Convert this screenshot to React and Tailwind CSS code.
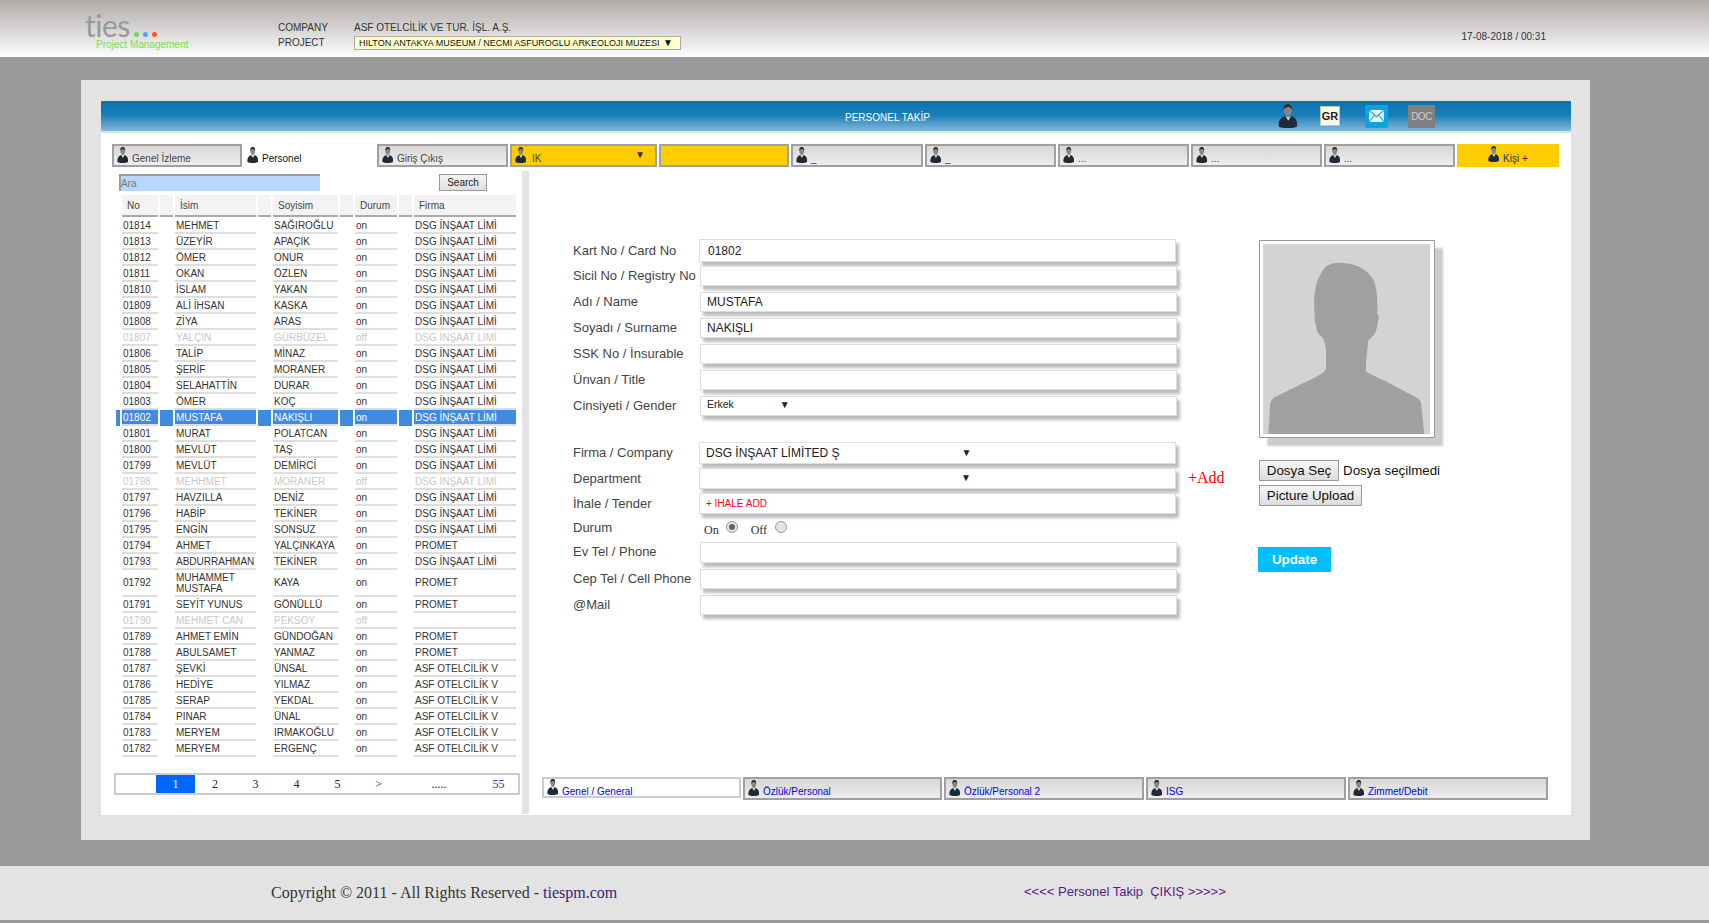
import React from "react";

const PersonIcon = ({ className = "w-[11px] h-[16px]" }) => (
  <svg viewBox="0 0 26 32" preserveAspectRatio="none" className={`shrink-0 ${className}`}>
    <path d="M8 8C7 3 10 0 14 0c4 0 6 3 5 8 0 4-2 8-5 8s-6-4-6-8z" fill="#8d8582" />
    <path d="M8 8C7 2 11-1 15 0c3 1 5 4 4 8-1-3-3-4-5-4S9 5 8 8z" fill="#2c2c2c" />
    <path d="M1 30c-1-8 3-12 9-14l4 3 4-3c6 2 9 6 8 14-5 3-20 3-25 0z" fill="#1d2a38" />
    <path d="M10 16l4 6 4-6-4 2z" fill="#dfe3e6" />
  </svg>
);

const Tab = ({ w, label, yellow, arrow, blue }) => (
  <div
    className={`${w} h-[23px] border-2 border-[#a0a0a0] flex items-start pl-[3px] pt-[1px] ${
      yellow ? "bg-[#ffcc00]" : "bg-gradient-to-b from-[#d8d6d6] to-[#eeeeee]"
    }`}
  >
    {label !== undefined && <PersonIcon />}
    {label !== undefined && (
      <span className={`${yellow ? "ml-[6px]" : "ml-[4px]"} mt-[5px] text-[10px] leading-[13px] ${blue ? "text-[#0000ee]" : "text-[#444]"}`}>{label}</span>
    )}
    {arrow && <span className="ml-auto mr-[10px] mt-px text-[10px] leading-[14px] text-[#333]">▼</span>}
  </div>
);

const people = [
  ["01814", "MEHMET", "SAĞIROĞLU", "on", "DSG İNŞAAT LİMİ"],
  ["01813", "ÜZEYİR", "APAÇIK", "on", "DSG İNŞAAT LİMİ"],
  ["01812", "ÖMER", "ONUR", "on", "DSG İNŞAAT LİMİ"],
  ["01811", "OKAN", "ÖZLEN", "on", "DSG İNŞAAT LİMİ"],
  ["01810", "İSLAM", "YAKAN", "on", "DSG İNŞAAT LİMİ"],
  ["01809", "ALİ İHSAN", "KASKA", "on", "DSG İNŞAAT LİMİ"],
  ["01808", "ZİYA", "ARAS", "on", "DSG İNŞAAT LİMİ"],
  ["01807", "YALÇIN", "GÜRBÜZEL", "off", "DSG İNŞAAT LİMİ"],
  ["01806", "TALİP", "MİNAZ", "on", "DSG İNŞAAT LİMİ"],
  ["01805", "ŞERİF", "MORANER", "on", "DSG İNŞAAT LİMİ"],
  ["01804", "SELAHATTİN", "DURAR", "on", "DSG İNŞAAT LİMİ"],
  ["01803", "ÖMER", "KOÇ", "on", "DSG İNŞAAT LİMİ"],
  ["01802", "MUSTAFA", "NAKIŞLI", "on", "DSG İNŞAAT LİMİ"],
  ["01801", "MURAT", "POLATCAN", "on", "DSG İNŞAAT LİMİ"],
  ["01800", "MEVLÜT", "TAŞ", "on", "DSG İNŞAAT LİMİ"],
  ["01799", "MEVLÜT", "DEMİRCİ", "on", "DSG İNŞAAT LİMİ"],
  ["01798", "MEHHMET", "MORANER", "off", "DSG İNŞAAT LİMİ"],
  ["01797", "HAVZILLA", "DENİZ", "on", "DSG İNŞAAT LİMİ"],
  ["01796", "HABİP", "TEKİNER", "on", "DSG İNŞAAT LİMİ"],
  ["01795", "ENGİN", "SONSUZ", "on", "DSG İNŞAAT LİMİ"],
  ["01794", "AHMET", "YALÇINKAYA", "on", "PROMET"],
  ["01793", "ABDURRAHMAN", "TEKİNER", "on", "DSG İNŞAAT LİMİ"],
  ["01792", "MUHAMMET MUSTAFA", "KAYA", "on", "PROMET"],
  ["01791", "SEYİT YUNUS", "GÖNÜLLÜ", "on", "PROMET"],
  ["01790", "MEHMET CAN", "PEKSOY", "off", ""],
  ["01789", "AHMET EMİN", "GÜNDOĞAN", "on", "PROMET"],
  ["01788", "ABULSAMET", "YANMAZ", "on", "PROMET"],
  ["01787", "ŞEVKİ", "ÜNSAL", "on", "ASF OTELCİLİK V"],
  ["01786", "HEDİYE", "YILMAZ", "on", "ASF OTELCİLİK V"],
  ["01785", "SERAP", "YEKDAL", "on", "ASF OTELCİLİK V"],
  ["01784", "PINAR", "ÜNAL", "on", "ASF OTELCİLİK V"],
  ["01783", "MERYEM", "IRMAKOĞLU", "on", "ASF OTELCİLİK V"],
  ["01782", "MERYEM", "ERGENÇ", "on", "ASF OTELCİLİK V"],
];

const PersonTable = () => {
  const head = "h-[22px] bg-[#f3f3f3] border-b-2 border-[#aaa] pl-[5px] text-left font-normal text-[#444]";
  return (
    <table className="table-fixed w-[404px] ml-[13px] mt-[4px] border-separate border-spacing-x-[2px] border-spacing-y-0 text-[10px] leading-[11px]">
      <colgroup>
        <col className="w-[4px]" />
        <col className="w-[36px]" />
        <col className="w-[13px]" />
        <col className="w-[81px]" />
        <col className="w-[13px]" />
        <col className="w-[65px]" />
        <col className="w-[13px]" />
        <col className="w-[42px]" />
        <col className="w-[13px]" />
        <col className="w-[102px]" />
      </colgroup>
      <thead>
        <tr>
          <th />
          <th className={head}>No</th>
          <th className={head} />
          <th className={head}>İsim</th>
          <th className={head} />
          <th className={head}>Soyisim</th>
          <th className={head} />
          <th className={head}>Durum</th>
          <th className={head} />
          <th className={head}>Firma</th>
        </tr>
        <tr className="h-px" />
      </thead>
      <tbody>
        {people.map((p) => {
          const active = p[0] === "01802";
          const color = active ? "text-white bg-[#4289e0]" : p[3] === "off" ? "text-[#c8c8c8]" : "text-[#333]";
          const rowH = p[0] === "01792" ? "h-[27px]" : "h-[16px]";
          const cell = `${rowH} pl-px border-b-2 border-[#dedede] align-middle ${color}`;
          const gap = `border-b-0 ${active ? "bg-[#4289e0]" : ""}`;
          return (
            <tr key={p[0]}>
              <td className={active ? "bg-[#4289e0]" : ""} />
              <td className={`${cell} pl-[2px]`}>{p[0]}</td>
              <td className={gap} />
              <td className={cell}>{p[1]}</td>
              <td className={gap} />
              <td className={cell}>{p[2]}</td>
              <td className={gap} />
              <td className={cell}>{p[3]}</td>
              <td className={gap} />
              <td className={cell}>{p[4]}</td>
            </tr>
          );
        })}
      </tbody>
    </table>
  );
};

const Pagination = () => (
  <div className="mt-[16px] ml-[13px] w-[406px] h-[22px] border-2 border-[#ccc] flex items-stretch font-['Liberation_Serif',serif] text-[12px] text-[#222]">
    <span className="w-[40px]" />
    <span className="w-[39px] bg-[#0066ff] text-white flex items-center justify-center">1</span>
    <span className="w-[40px] flex items-center justify-center">2</span>
    <span className="w-[41px] flex items-center justify-center">3</span>
    <span className="w-[41px] flex items-center justify-center">4</span>
    <span className="w-[41px] flex items-center justify-center">5</span>
    <span className="w-[41px] flex items-center justify-center text-[#0000ee]">&gt;</span>
    <span className="w-[80px] flex items-center justify-center">.....</span>
    <span className="flex-1 flex items-center justify-center text-[#3b2a9a]">55</span>
  </div>
);

const Field = ({ label, mt, h, narrow, lead = "leading-[20px]", children, side }) => (
  <div className={`flex ${mt} ${h}`}>
    <div className={`${narrow ? "w-[126px]" : "w-[127px]"} shrink-0 text-[13px] ${lead} text-[#444] whitespace-nowrap`}>{label}</div>
    <div className="w-[477px] shrink-0 bg-white border border-[#ddd] shadow-[3px_4px_3px_#bbb] flex items-center pl-[6px] text-[12px] text-[#222]">
      {children}
    </div>
    {side}
  </div>
);

const Arrow = ({ ml }) => <span className={`${ml} text-[10px] leading-[12px] text-[#222]`}>▼</span>;

const Radio = ({ checked }) => (
  <span className="w-[12px] h-[12px] rounded-full border border-[#999] bg-[#e4e4e4] flex items-center justify-center">
    {checked && <span className="w-[6px] h-[6px] rounded-full bg-[#666]" />}
  </span>
);

const Silhouette = () => (
  <svg viewBox="0 0 501 571" className="w-[167px] h-[190px] block bg-[#d3d3d3]">
    <path
      d="M16 571 L21 480 Q24 466 36 460 L166 396 Q186 386 189 375 L189 319 Q186 290 176 279 Q160 270 158 240 Q152 232 156 214 Q150 180 156 140 Q160 105 186 69 Q205 56 231 56 Q300 58 330 105 Q345 130 343 209 Q350 220 346 228 Q340 265 336 269 Q322 285 316 289 L309 359 L309 384 Q340 400 361 409 L466 464 Q476 472 476 489 L484 571 Z"
      fill="#a0a0a0"
    />
  </svg>
);

const App = () => (
  <div className="w-[1709px] h-[923px] overflow-hidden bg-[#999999] font-['Liberation_Sans',Arial,sans-serif]">
    {/* top bar */}
    <header className="h-[57px] bg-gradient-to-b from-[#b0acaa] to-[#fdfdfd] flex pl-[85px] pr-[163px]">
      <div className="w-[193px] pt-[12px]">
        <div className="flex items-end h-[26px]">
          <span className="font-['Lato',sans-serif] font-normal text-[30px] leading-[26px] text-[#999] tracking-[-0.5px]">ties</span>
          <span className="w-[5px] h-[5px] rounded-full bg-[#66dd55] ml-[4px] mb-[1px]" />
          <span className="w-[5px] h-[5px] rounded-full bg-[#44aaff] ml-[4px] mb-[1px]" />
          <span className="w-[5px] h-[5px] rounded-full bg-[#ff5511] ml-[4px] mb-[1px]" />
        </div>
        <div className="mt-px ml-[11px] text-[10px] leading-[12px] text-[#77dd55] whitespace-nowrap">Project Management</div>
      </div>
      <div className="w-[76px] pt-[20px] text-[10px] leading-[15px] text-[#333]">
        <div>COMPANY</div>
        <div>PROJECT</div>
      </div>
      <div className="pt-[20px] text-[10px] text-[#333]">
        <div className="leading-[15px]">ASF OTELCİLİK VE TUR. İŞL. A.Ş.</div>
        <div className="w-[327px] h-[14px] mt-px bg-[#ffffcc] border border-[#aaa] flex items-center pl-[4px] justify-between pr-[7px] text-[9px] leading-[12px] text-[#111] whitespace-nowrap">
          HILTON ANTAKYA MUSEUM / NECMI ASFUROGLU ARKEOLOJI MUZESI
          <span className="text-[10px]">▼</span>
        </div>
      </div>
      <div className="ml-auto pt-[30px] text-[10px] leading-[14px] text-[#333]">17-08-2018 / 00:31</div>
    </header>

    {/* main panel */}
    <main className="mt-[23px] ml-[81px] w-[1509px] h-[760px] bg-[#e3e3e3] pt-[21px] pl-[20px]">
      <div className="w-[1470px] h-[714px] bg-white flex flex-col">
        <div className="h-[30px] bg-gradient-to-b from-[#0872af] via-[#1a80b8] to-[#7fb9dc] flex items-center shrink-0 pl-[744px]">
          <span className="w-[433px] mt-[2px] text-[10px] text-white">PERSONEL TAKİP</span>
          <PersonIcon className="w-[19px] h-[24px]" />
          <span className="ml-[23px] w-[20px] h-[20px] bg-[#f6f8f0] border border-[#b6d09a] text-[11px] font-bold text-[#222] flex items-center justify-center">GR</span>
          <span className="ml-[25px] w-[23px] h-[23px] rounded-[2px] bg-[#0fa3dc] flex items-center justify-center">
            <svg viewBox="0 0 20 16" className="w-[15px] h-[12px]">
              <rect width="20" height="16" fill="#e8f6fc" />
              <path d="M0 0l10 9L20 0M0 16l7-9M20 16l-7-9" fill="none" stroke="#0fa3dc" strokeWidth="1.4" />
            </svg>
          </span>
          <span className="ml-[20px] w-[27px] h-[23px] bg-[#808080] text-[10px] tracking-[-0.5px] text-[#ccc] flex items-center justify-center">DOC</span>
        </div>
        <div className="h-[2px] bg-[#e3e3e3] shrink-0" />

        {/* tabs */}
        <div className="mt-[11px] ml-[11px] h-[23px] flex gap-[2px] shrink-0">
          <Tab w="w-[130px]" label="Genel İzleme" />
          <div className="w-[131px] flex items-start pl-[3px] pt-[3px]">
            <PersonIcon />
            <span className="ml-[4px] mt-[5px] text-[10px] leading-[13px] text-[#111]">Personel</span>
          </div>
          <Tab w="w-[131px]" label="Giriş Çıkış" />
          <Tab w="w-[147px]" label="IK" yellow arrow />
          <Tab w="w-[130px]" yellow />
          <Tab w="w-[132px]" label="_" />
          <Tab w="w-[131px]" label="_" />
          <Tab w="w-[131px]" label="..." />
          <Tab w="w-[131px]" label="..." />
          <Tab w="w-[131px]" label="..." />
          <div className="w-[102px] bg-[#ffcc00] flex items-start pl-[31px] pt-[2px]">
            <PersonIcon />
            <span className="ml-[4px] mt-[6px] text-[10px] leading-[13px] text-[#333]">Kişi +</span>
          </div>
        </div>

        <div className="mt-[4px] flex flex-1 min-h-0">
          {/* left list */}
          <div className="w-[421px] shrink-0 pt-[3px]">
            <div className="flex ml-[18px] h-[17px]">
              <div className="w-[201px] h-[17px] bg-[#b8d8fb] border-t-2 border-l-2 border-[#999] border-r-0 border-b-0 text-[10px] leading-[15px] text-[#777]">Ara</div>
              <button className="ml-[119px] w-[48px] h-[17px] border border-[#999] bg-gradient-to-b from-[#f4f4f4] to-[#e0e0e0] text-[10px] leading-[14px] text-[#222]">
                Search
              </button>
            </div>
            <PersonTable />
            <Pagination />
          </div>
          <div className="w-[7px] h-[643px] bg-[#e3e3e3] shrink-0" />

          {/* right form */}
          <div className="flex-1 flex flex-col min-w-0">
            <div className="flex pl-[44px] pt-[68px]">
              <div className="w-[686px] shrink-0">
                <Field label="Kart No / Card No" mt="mt-0" h="h-[23px]" narrow lead="leading-[23px]">
                  <span className="ml-[2px]">01802</span>
                </Field>
                <Field label="Sicil No / Registry No" mt="mt-[4px]" h="h-[20px]" lead="leading-[19px]" />
                <Field label="Adı / Name" mt="mt-[6px]" h="h-[20px]">MUSTAFA</Field>
                <Field label="Soyadı / Surname" mt="mt-[6px]" h="h-[20px]">NAKIŞLI</Field>
                <Field label="SSK No / İnsurable" mt="mt-[6px]" h="h-[20px]" />
                <Field label="Ünvan / Title" mt="mt-[6px]" h="h-[20px]" />
                <Field label="Cinsiyeti / Gender" mt="mt-[6px]" h="h-[20px]">
                  <span className="text-[10.5px] mb-[2px]">Erkek</span>
                  <Arrow ml="ml-[46px] mb-[3px]" />
                </Field>
                <Field label="Firma / Company" mt="mt-[26px]" h="h-[22px]" narrow lead="leading-[22px]">
                  DSG İNŞAAT LİMİTED Ş
                  <Arrow ml="ml-[122px]" />
                </Field>
                <Field
                  label="Department"
                  mt="mt-[4px]"
                  h="h-[21px]"
                  narrow
                  lead="leading-[21px]"
                  side={<span className="ml-[12px] font-['Liberation_Serif',serif] text-[16px] leading-[20px] text-[#ff0000]">+Add</span>}
                >
                  <Arrow ml="ml-[255px] mb-[1px]" />
                </Field>
                <Field label="İhale / Tender" mt="mt-[4px]" h="h-[21px]" narrow lead="leading-[21px]">
                  <span className="text-[10px] text-[#ff0022]">+ IHALE ADD</span>
                </Field>
                <div className="flex h-[20px] mt-[4px]">
                  <div className="w-[131px] shrink-0 text-[13px] leading-[20px] text-[#444]">Durum</div>
                  <div className="flex items-start font-['Liberation_Serif',serif] text-[12px] leading-[20px] text-[#333]">
                    <span className="mt-[2px]">On</span>
                    <span className="ml-[7px] mt-[3px]"><Radio checked /></span>
                    <span className="ml-[13px] mt-[2px]">Off</span>
                    <span className="ml-[8px] mt-[3px]"><Radio /></span>
                  </div>
                </div>
                <Field label="Ev Tel / Phone" mt="mt-[4px]" h="h-[21px]" />
                <Field label="Cep Tel / Cell Phone" mt="mt-[6px]" h="h-[20px]" />
                <Field label="@Mail" mt="mt-[6px]" h="h-[20px]" />
              </div>

              <div className="pt-px">
                <div className="w-[176px] h-[198px] border border-[#999] bg-white p-[3px] shadow-[8px_8px_2px_#cccccc]">
                  <Silhouette />
                </div>
                <div className="mt-[22px] flex items-center h-[21px] text-[13.33px] text-[#111]">
                  <button className="w-[80px] h-[21px] border border-[#999] bg-gradient-to-b from-[#f6f6f6] to-[#dddddd] leading-[18px]">Dosya Seç</button>
                  <span className="ml-[4px] whitespace-nowrap">Dosya seçilmedi</span>
                </div>
                <button className="mt-[4px] block w-[103px] h-[21px] border border-[#999] bg-gradient-to-b from-[#f6f6f6] to-[#dddddd] text-[13.33px] leading-[18px] text-[#111]">
                  Picture Upload
                </button>
                <button className="mt-[41px] -ml-px block w-[73px] h-[25px] bg-[#00bfff] text-[13.33px] font-bold text-white">Update</button>
              </div>
            </div>

            <div className="mt-auto mb-[17px] ml-[13px] flex gap-[2px] h-[21px]">
              <div className="w-[199px] border-2 border-[#ccc] bg-white flex items-start pl-[3px]">
                <PersonIcon />
                <span className="ml-[4px] mt-[6px] text-[10px] leading-[13px] text-[#0000ee]">Genel / General</span>
              </div>
              <Tab w="w-[199px]" label="Özlük/Personal" blue />
              <Tab w="w-[200px]" label="Özlük/Personal 2" blue />
              <Tab w="w-[200px]" label="ISG" blue />
              <Tab w="w-[200px]" label="Zimmet/Debit" blue />
            </div>
          </div>
        </div>
      </div>
    </main>

    {/* footer */}
    <footer className="mt-[26px] h-[54px] bg-[#e3e3e3] flex pl-[271px]">
      <div className="w-[753px] pt-[17px] font-['Liberation_Serif',serif] text-[16px] leading-[20px] text-[#333]">
        Copyright © 2011 - All Rights Reserved - <span className="text-[#3b1a78]">tiespm.com</span>
      </div>
      <div className="pt-[17px] text-[13px] leading-[18px] text-[#551a8b] whitespace-pre">{"<<<< Personel Takip  ÇIKIŞ >>>>>"}</div>
    </footer>
  </div>
);

export default App;
